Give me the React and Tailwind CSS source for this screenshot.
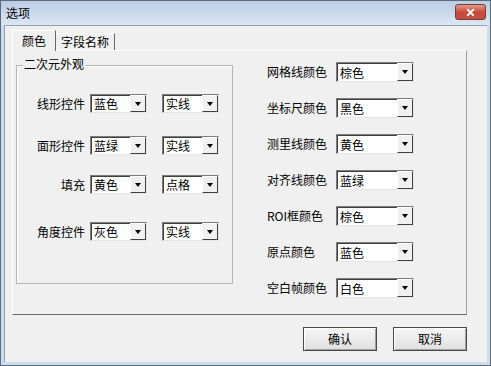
import { X } from "lucide-react";

const font = { fontFamily: '"Noto Sans CJK SC", "Noto Sans", sans-serif' };

const Combo = ({ value, width = "w-[57px]", height = "h-[19px]" }) => (
  <div
    className={`${width} ${height} flex bg-white border border-t-[#7c7c7c] border-l-[#7c7c7c] border-r-[#e6e6e6] border-b-[#e6e6e6]`}
  >
    <div className="flex-1 flex items-center pl-[2px] text-[12px] leading-none text-black border-t border-l border-[#404040] border-r-0 border-b-0">
      {value}
    </div>
    <div className="w-[16px] flex items-center justify-center bg-[#f0f0f0] border-t border-l border-t-white border-l-white border-r border-b border-r-[#404040] border-b-[#404040]">
      <div className="w-0 h-0 border-l-[3.5px] border-r-[3.5px] border-t-[4px] border-l-transparent border-r-transparent border-t-black" />
    </div>
  </div>
);

const LeftRow = ({ label, a, b, mt }) => (
  <div className={`flex items-center ${mt}`}>
    <div className="w-[73px] pr-[5px] text-right text-[12px] leading-none">{label}</div>
    <Combo value={a} />
    <div className="w-[15px]" />
    <Combo value={b} />
  </div>
);

const RightRow = ({ label, value }) => (
  <div className="flex items-center h-[20px]">
    <div className="w-[69px] text-[12px] leading-none whitespace-nowrap">{label}</div>
    <Combo value={value} width="w-[78px]" height="h-[20px]" />
  </div>
);

const Btn = ({ children }) => (
  <button className="w-[74px] h-[24px] flex items-center justify-center text-[12px] leading-none bg-gradient-to-b from-[#f6f6f6] to-[#e0e0e0] border border-[#4a4a4a] shadow-[inset_1px_1px_0_#ffffff,inset_-1px_-1px_0_#a0a0a0]">
    {children}
  </button>
);

export default function App() {
  return (
    <div
      className="w-[491px] h-[366px] flex flex-col bg-[#cddcec] border border-[#5b6b7c] text-black"
      style={font}
    >
      {/* title bar */}
      <div className="h-[24px] flex items-center justify-between pl-[5px] pr-[4px] bg-gradient-to-b from-[#b9cde4] to-[#dbe6f2]">
        <span className="text-[12px] leading-none">选项</span>
        <div className="w-[31px] h-[16px] mt-[-2px] rounded-[3px] flex items-center justify-center bg-gradient-to-b from-[#e49a8c] via-[#c9483a] to-[#c14e3f] border border-[#7b3a33]">
          <X className="w-[11px] h-[11px] text-white" strokeWidth={4} />
        </div>
      </div>

      {/* client area */}
      <div className="flex-1 ml-[3px] mr-[3px] mb-[3px] bg-[#f0f0f0] border-l border-t border-[#8ea3bb] flex flex-col pl-[7px] pr-[20px]">
        {/* tabs */}
        <div className="flex items-end h-[24px] relative z-10">
          <div className="h-[21px] w-[44px] flex items-center justify-center bg-[#f0f0f0] border-t border-l border-white border-r border-r-[#696969] text-[12px] leading-none mb-[-1px] pb-[1px]">
            颜色
          </div>
          <div className="h-[17px] px-[5px] flex items-center bg-[#f0f0f0] border-t border-white border-r border-r-[#696969] text-[12px] leading-none">
            字段名称
          </div>
        </div>

        {/* panel */}
        <div className="h-[265px] flex border-t border-l border-white border-r border-r-[#a0a0a0] border-b border-b-[#696969]">
          {/* group box */}
          <div className="relative ml-[3px] mt-[14px] w-[217px] h-[219px] border border-[#b4b4b4] shadow-[inset_1px_1px_0_#ffffff]">
            <span className="absolute left-[6px] top-[-8px] px-[1px] bg-[#f0f0f0] text-[12px] leading-none">二次元外观</span>
            <LeftRow label="线形控件" a="蓝色" b="实线" mt="mt-[28px]" />
            <LeftRow label="面形控件" a="蓝绿" b="实线" mt="mt-[23px]" />
            <LeftRow label="填充" a="黄色" b="点格" mt="mt-[20px]" />
            <LeftRow label="角度控件" a="灰色" b="实线" mt="mt-[28px]" />
          </div>

          {/* right column */}
          <div className="ml-[34px] mt-[11px] flex flex-col gap-[16px]">
            <RightRow label="网格线颜色" value="棕色" />
            <RightRow label="坐标尺颜色" value="黑色" />
            <RightRow label="测里线颜色" value="黄色" />
            <RightRow label="对齐线颜色" value="蓝绿" />
            <RightRow label="ROI框颜色" value="棕色" />
            <RightRow label="原点颜色" value="蓝色" />
            <RightRow label="空白帧颜色" value="白色" />
          </div>
        </div>

        {/* buttons */}
        <div className="flex justify-end gap-[16px] mt-[12px]">
          <Btn>确认</Btn>
          <Btn>取消</Btn>
        </div>
      </div>
    </div>
  );
}
